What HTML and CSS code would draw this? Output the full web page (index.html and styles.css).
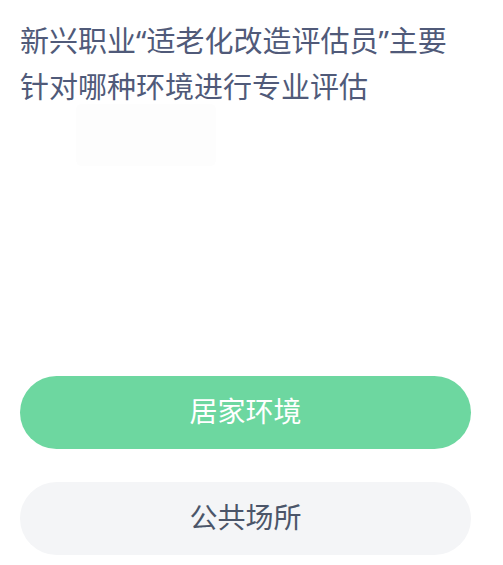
FILE: index.html
```html
<!DOCTYPE html>
<html lang="zh">
<head>
<meta charset="utf-8">
<link rel="stylesheet" href="styles.css">
</head>
<body>
<div class="page">
  <h1 class="question">新兴职业“适老化改造评估员”主要针对哪种环境进行专业评估</h1>
  <div class="ghost"></div>
  <div class="options">
    <button class="option option-correct">居家环境</button>
    <button class="option">公共场所</button>
  </div>
</div>
</body>
</html>
```
FILE: styles.css
```css
html, body {
  margin: 0;
  padding: 0;
  background: #ffffff;
}
.page {
  width: 503px;
  height: 565px;
  box-sizing: border-box;
  padding: 18px 20px 0 20px;
  font-family: "Noto Sans", "Noto Sans CJK SC", sans-serif;
}
.question {
  margin: 0;
  font-size: 29px;
  line-height: 46px;
  font-weight: 400;
  color: #505a79;
  width: 450px;
}
.ghost {
  width: 140px;
  height: 62px;
  margin: -6px 0 0 56px;
  background: #fdfdfd;
  border-radius: 6px;
}
.options {
  display: flex;
  flex-direction: column;
  gap: 33px;
  margin-top: 210px;
}
.option {
  display: block;
  width: 451px;
  height: 73px;
  border: none;
  border-radius: 37px;
  background: #f4f5f7;
  color: #4b5569;
  font-family: "Noto Sans", "Noto Sans CJK SC", sans-serif;
  font-size: 28px;
  padding: 0 0 5px 0;
  margin: 0;
  text-align: center;
}
.option-correct {
  background: #6dd7a0;
  color: #ffffff;
}
```
